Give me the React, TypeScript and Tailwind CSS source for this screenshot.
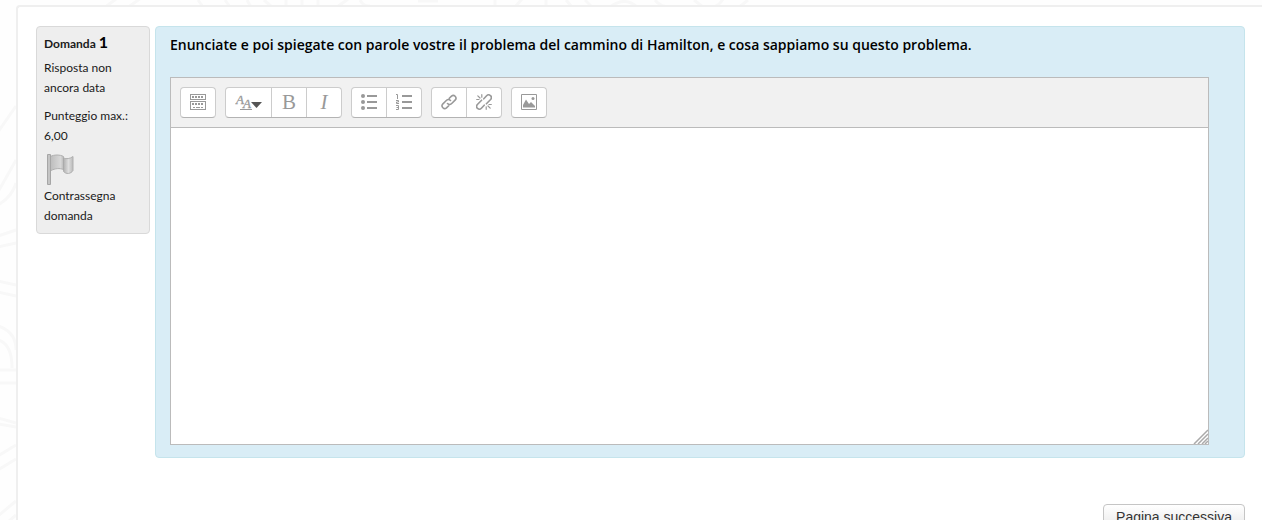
import type { ReactNode } from "react";

function ToolGroup({ children }: { children: ReactNode }) {
  return (
    <div className="flex h-[31px] divide-x divide-[#ccc] overflow-hidden rounded border border-[#ccc] border-b-[#b3b3b3] bg-white">
      {children}
    </div>
  );
}

function Tool({ label, wide = false, children }: { label: string; wide?: boolean; children: ReactNode }) {
  return (
    <button
      type="button"
      aria-label={label}
      className={`flex items-center justify-center text-[#999] hover:bg-gray-100 ${wide ? "w-[46px]" : "w-[35px] last:w-[34px]"}`}
    >
      {children}
    </button>
  );
}

function ToggleIcon() {
  return (
    <svg width="16" height="17" viewBox="0 0 16 17" fill="none" stroke="currentColor" shapeRendering="crispEdges">
      <path d="M.5.5h15v5H.5zM.5 7.5h15v8H.5z" />
      <path d="M2 3h12" strokeWidth="2" strokeDasharray="2 1" />
      <path d="M2 10h12" strokeWidth="2" strokeDasharray="2 1" />
      <path d="M3 13.500h2M6 13.500h4M11 13.500h2" strokeWidth="1" />
    </svg>
  );
}

function StyleIcon() {
  return (
    <svg width="28" height="21" viewBox="0 0 28 21" fill="currentColor">
      <g fontFamily="Liberation Serif, serif" fontStyle="italic" stroke="currentColor" strokeWidth=".3">
        <text x="1" y="12" fontSize="13">A</text>
        <text x="8" y="16" fontSize="13">A</text>
      </g>
      <path d="M5 17h12v1H5z" />
      <path d="M16 10h11l-5.500 6z" fill="#555" />
    </svg>
  );
}

function BulletsIcon() {
  return (
    <svg width="16" height="17" viewBox="0 0 16 17" fill="currentColor">
      <circle cx="2" cy="2" r="2" />
      <circle cx="2" cy="8" r="2" />
      <circle cx="2" cy="14" r="2" />
      <path d="M6 1h10v2H6zM6 7h10v2H6zM6 13h10v2H6z" />
    </svg>
  );
}

function NumbersIcon() {
  return (
    <svg width="16" height="17" viewBox="0 0 16 17" fill="currentColor">
      <path d="M6 1h10v2H6zM6 7h10v2H6zM6 13h10v2H6z" />
      <path
        d="M0 .5h1.500V5M0 6.500h2.500v1.500H.5v1.500H3M0 11.500h2.500v4H0M.5 13.500h2"
        fill="none"
        stroke="currentColor"
      />
    </svg>
  );
}

function LinkIcon() {
  return (
    <svg width="16" height="17" viewBox="0 0 16 17" fill="none" stroke="currentColor" strokeWidth="1.600" strokeLinecap="round">
      <path d="M6.500 9.500a3 3 0 0 0 4.200 0l3.600-3.600a2.700 2.700 0 0 0-3.800-3.800L8.300 4.300M9.500 6.500a3 3 0 0 0-4.200 0l-3.600 3.600a2.700 2.700 0 0 0 3.800 3.800l2.200-2.200" />
    </svg>
  );
}

function UnlinkIcon() {
  return (
    <svg width="16" height="17" viewBox="0 0 16 17" fill="none" stroke="currentColor" strokeLinecap="round">
      <path
        strokeWidth="1.600"
        d="M7.800 4.800l2.800-3a2.700 2.700 0 0 1 4 3.700l-4.200 4.300M8.200 11.200l-2.800 3a2.700 2.700 0 0 1-4-3.700l4.200-4.300"
      />
      <path d="M1.800 1.800l2.200 2.200M5.800.7v2.500M.7 5.500h2.300M14.200 14.200L12 12M10.200 15.300v-2.500M15.300 10.500H13" strokeWidth="1.200" />
    </svg>
  );
}

function PictureIcon() {
  return (
    <svg width="16" height="17" viewBox="0 0 16 17" fill="currentColor">
      <path d="M.5.5h15v15H.5z" fill="none" stroke="currentColor" />
      <path d="M2 13.500V11l3-5.500L8 10l2-2 4 4v1.500z" />
      <circle cx="12" cy="4.500" r="1.500" />
    </svg>
  );
}

function FlagIcon() {
  return (
    <svg width="32" height="34" viewBox="0 0 32 34" aria-hidden="true">
      <defs>
        <linearGradient id="cloth" x1="0" x2="1" y1="0" y2="0">
          <stop offset="0" stopColor="#bdbdbd" />
          <stop offset=".45" stopColor="#d8d8d8" />
          <stop offset=".6" stopColor="#b5b5b5" />
          <stop offset=".8" stopColor="#dedede" />
          <stop offset="1" stopColor="#b9b9b9" />
        </linearGradient>
      </defs>
      <path
        d="M6.500 4.500C10 2.500 16 2.500 19.500 4.500v1.500c3 1.200 6.500.8 9.500-1.500v14c-2 3.500-7 4-9.500 1v-2c-4-1.500-8-1.200-13 1.200z"
        fill="url(#cloth)"
        stroke="#b0b0b0"
      />
      <path d="M19.500 6v12" stroke="#aaa" fill="none" />
      <path d="M3.500 2.500h3v30h-3z" fill="#c4c4c4" stroke="#a6a6a6" />
    </svg>
  );
}

function Backdrop() {
  return (
    <svg className="absolute top-0 left-0" width="800" height="520" fill="none" stroke="#f8f8f8" strokeWidth="3" aria-hidden="true">
      <path d="M104 8l12-9M127 8l14-10M198 0l5 7M225 0l5 7M247 0l4 7M264 0l8 7M286 7V0M302 7V0M318 7V0M337 7q7-5 11-8M360 0q4 7 10 6M418 1h20M495 7V0M515 7l7-8M546 0v7M566 0l6 7M585 0l7 7M610 7q15-11 27 0M655 0q6 8 18 7M694 0l9 7q14 3 20-8M738 8l10-8" />
      <path d="M-2 132l18-26M-2 192l18-32M-2 205q14-8 18-22M-2 236l18-6M-2 247l18-4M-2 281l18 4M-2 292l18 4M-2 326q18 6 18 24M-2 340q14 4 14 28M-2 370h18M-2 383h18M-2 418l18 5M-2 424l18 3M-2 456l18-11M-2 470l18-11M-2 516l18-15M8 522l8-7" />
    </svg>
  );
}

export default function App() {
  return (
    <div className="relative h-screen overflow-y-auto bg-[#fefefe] pt-[5px] pl-4 font-['Open_Sans',sans-serif] text-[#1a1a1a] [scrollbar-width:none]">
      <Backdrop />
      <main className="relative min-h-full rounded-tl border-t-2 border-l-2 border-[#efefef] bg-white pt-[19px] pr-[17px] pb-8 pl-[18px]">
        <div className="flex items-start gap-[5px]">
          <aside className="w-[114px] shrink-0 rounded-sm border border-[#d9d9d9] bg-[#eee] px-[7px] pt-[5px] pb-[7px] font-['Lato',sans-serif] text-xs leading-5">
            <h3 className="font-bold">
              Domanda <span className="text-base leading-5 text-black">1</span>
            </h3>
            <p className="mt-1">Risposta non ancora data</p>
            <p className="mt-2">Punteggio max.: 6,00</p>
            <button type="button" className="mt-[6px] block text-left">
              <FlagIcon />
              <span className="block">Contrassegna domanda</span>
            </button>
          </aside>

          <section className="min-w-0 flex-1 rounded border border-[#c5e4ec] bg-[#d9edf6] pt-2 pr-[35px] pb-3 pl-[14px]">
            <label htmlFor="answer" className="block text-sm leading-5 font-semibold text-black">
              Enunciate e poi spiegate con parole vostre il problema del cammino di Hamilton, e cosa sappiamo su questo
              problema.
            </label>
            <div className="mt-[22px] border border-[#bbb] bg-white">
              <div role="toolbar" aria-label="Formattazione" className="flex flex-wrap gap-[9px] border-b border-[#bbb] bg-[#f1f1f1] p-[9px]">
                <ToolGroup>
                  <Tool label="Mostra altri pulsanti"><ToggleIcon /></Tool>
                </ToolGroup>
                <ToolGroup>
                  <Tool label="Stile del paragrafo" wide><StyleIcon /></Tool>
                  <Tool label="Grassetto"><span className="font-['Liberation_Serif',serif] text-[21px] leading-[27px]">B</span></Tool>
                  <Tool label="Corsivo"><span className="font-['Liberation_Serif',serif] text-[21px] leading-[27px] italic">I</span></Tool>
                </ToolGroup>
                <ToolGroup>
                  <Tool label="Elenco puntato"><BulletsIcon /></Tool>
                  <Tool label="Elenco numerato"><NumbersIcon /></Tool>
                </ToolGroup>
                <ToolGroup>
                  <Tool label="Collegamento"><LinkIcon /></Tool>
                  <Tool label="Rimuovi collegamento"><UnlinkIcon /></Tool>
                </ToolGroup>
                <ToolGroup>
                  <Tool label="Immagine"><PictureIcon /></Tool>
                </ToolGroup>
              </div>
              <div className="relative">
                <textarea id="answer" className="block h-[316px] w-full resize-none bg-white p-2 text-sm outline-none" />
                <svg className="pointer-events-none absolute right-0 bottom-0" width="15" height="15" viewBox="0 0 15 15" stroke="#aaa" strokeWidth="1.500" aria-hidden="true">
                  <path d="M1 15L15 1M5 15L15 5M9 15l6-6M12 15l3-3" />
                </svg>
              </div>
            </div>
          </section>
        </div>
        <div className="mt-[46px] flex justify-end">
          <button
            type="button"
            className="rounded border border-[#c5c5c5] bg-linear-to-b from-white to-[#e6e6e6] px-3 pt-[2px] pb-1 font-['Liberation_Sans',sans-serif] text-sm leading-5 text-[#333]"
          >
            Pagina successiva
          </button>
        </div>
      </main>
    </div>
  );
}
